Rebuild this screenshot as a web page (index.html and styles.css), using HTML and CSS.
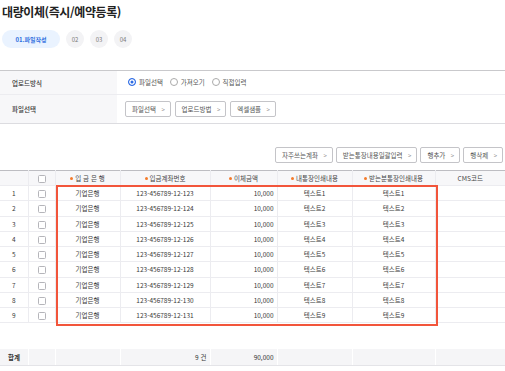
FILE: index.html
```html
<!DOCTYPE html>
<html lang="ko">
<head>
<meta charset="utf-8">
<link rel="stylesheet" href="styles.css">
</head>
<body>
<div class="page">
  <h1 class="title">대량이체(즉시/예약등록)</h1>
  <div class="steps">
    <span class="step active">01.파일작성</span>
    <span class="step">02</span>
    <span class="step">03</span>
    <span class="step">04</span>
  </div>

  <table class="form">
    <tr class="row-a">
      <th>업로드방식</th>
      <td>
        <label class="radio on"><span class="dot"></span>파일선택</label>
        <label class="radio"><span class="dot"></span>가져오기</label>
        <label class="radio"><span class="dot"></span>직접입력</label>
      </td>
    </tr>
    <tr class="row-b">
      <th>파일선택</th>
      <td>
        <span class="btn">파일선택<i class="chev">&gt;</i></span>
        <span class="btn">업로드방법<i class="chev">&gt;</i></span>
        <span class="btn">엑셀샘플<i class="chev">&gt;</i></span>
      </td>
    </tr>
  </table>

  <div class="actions">
    <span class="btn">자주쓰는계좌<i class="chev">&gt;</i></span>
    <span class="btn">받는통장내용일괄입력<i class="chev">&gt;</i></span>
    <span class="btn">행추가<i class="chev">&gt;</i></span>
    <span class="btn">행삭제<i class="chev">&gt;</i></span>
  </div>

  <div class="grid-wrap">
    <table class="grid">
      <colgroup>
        <col class="c-no"><col class="c-chk"><col class="c-bank"><col class="c-acc"><col class="c-amt"><col class="c-my"><col class="c-their"><col class="c-cms">
      </colgroup>
      <thead>
        <tr>
          <th></th>
          <th><span class="chk"></span></th>
          <th><span class="req">입 금 은 행</span></th>
          <th><span class="req">입금계좌번호</span></th>
          <th><span class="req">이체금액</span></th>
          <th><span class="req">내통장인쇄내용</span></th>
          <th><span class="req">받는분통장인쇄내용</span></th>
          <th>CMS코드</th>
        </tr>
      </thead>
      <tbody>
        <tr><td>1</td><td><span class="chk"></span></td><td>기업은행</td><td>123-456789-12-123</td><td class="num">10,000</td><td>텍스트1</td><td>텍스트1</td><td></td></tr>
        <tr><td>2</td><td><span class="chk"></span></td><td>기업은행</td><td>123-456789-12-124</td><td class="num">10,000</td><td>텍스트2</td><td>텍스트2</td><td></td></tr>
        <tr><td>3</td><td><span class="chk"></span></td><td>기업은행</td><td>123-456789-12-125</td><td class="num">10,000</td><td>텍스트3</td><td>텍스트3</td><td></td></tr>
        <tr><td>4</td><td><span class="chk"></span></td><td>기업은행</td><td>123-456789-12-126</td><td class="num">10,000</td><td>텍스트4</td><td>텍스트4</td><td></td></tr>
        <tr><td>5</td><td><span class="chk"></span></td><td>기업은행</td><td>123-456789-12-127</td><td class="num">10,000</td><td>텍스트5</td><td>텍스트5</td><td></td></tr>
        <tr><td>6</td><td><span class="chk"></span></td><td>기업은행</td><td>123-456789-12-128</td><td class="num">10,000</td><td>텍스트6</td><td>텍스트6</td><td></td></tr>
        <tr><td>7</td><td><span class="chk"></span></td><td>기업은행</td><td>123-456789-12-129</td><td class="num">10,000</td><td>텍스트7</td><td>텍스트7</td><td></td></tr>
        <tr><td>8</td><td><span class="chk"></span></td><td>기업은행</td><td>123-456789-12-130</td><td class="num">10,000</td><td>텍스트8</td><td>텍스트8</td><td></td></tr>
        <tr><td>9</td><td><span class="chk"></span></td><td>기업은행</td><td>123-456789-12-131</td><td class="num">10,000</td><td>텍스트9</td><td>텍스트9</td><td></td></tr>
        <tr class="spacer"><td colspan="8"></td></tr>
      </tbody>
      <tfoot>
        <tr>
          <td class="sum-label">합계</td><td></td><td></td><td class="num">9 건</td><td class="num">90,000</td><td></td><td></td><td></td>
        </tr>
      </tfoot>
    </table>
    <div class="highlight"></div>
  </div>
</div>
</body>
</html>
```

FILE: styles.css
```css
* { box-sizing: border-box; }
html, body { margin: 0; padding: 0; background: #fff; }
body {
  font-family: "Noto Sans CJK KR", "Noto Sans", sans-serif;
  color: #3a3a3a;
  font-size: 6.5px;
  -webkit-font-smoothing: antialiased;
}
.page { width: 505px; }

.title {
  margin: 0;
  padding: 4px 0 0 2px;
  font-size: 12px;
  line-height: 16px;
  font-weight: 700;
  color: #222;
  letter-spacing: -0.4px;
}

.steps {
  display: flex;
  gap: 6px;
  margin: 10px 0 0 2px;
  height: 18px;
}
.step {
  display: flex;
  align-items: center;
  justify-content: center;
  width: 18px;
  height: 18px;
  border-radius: 9px;
  background: #f3f3f5;
  color: #777;
  font-size: 6px;
}
.step.active {
  width: 58px;
  background: #eaf3ff;
  color: #2f6fe0;
  font-weight: 700;
}

.form {
  width: 100%;
  margin-top: 22px;
  border-collapse: collapse;
  border-top: 1px solid #c9c9cc;
  border-bottom: 1px solid #dcdce0;
}
.form th {
  width: 117px;
  background: #f7f7f9;
  text-align: left;
  font-weight: 500;
  color: #333;
  padding: 0 0 0 12px;
}
.form td { padding: 0 0 0 8px; }
.form .row-a th, .form .row-a td {
  height: 24px;
  border-bottom: 1px solid #ececf0;
}
.form .row-b th, .form .row-b td { height: 29px; }

.radio {
  display: inline-flex;
  align-items: center;
  gap: 3px;
  margin-right: 5px;
  color: #555;
}
.radio:first-child { margin-left: 3px; }
.radio .dot {
  width: 8px;
  height: 8px;
  border-radius: 50%;
  border: 1px solid #aaa;
  background: #fff;
}
.radio.on .dot {
  background: #2d6be4;
  border: 1.5px solid #2d6be4;
  box-shadow: inset 0 0 0 1.5px #fff;
}

.btn {
  display: inline-flex;
  align-items: center;
  height: 16px;
  padding: 0 5px 0 6px;
  border: 1px solid #c4c4c8;
  border-radius: 2px;
  background: #fff;
  color: #555;
  margin-right: 2px;
  white-space: nowrap;
}
.btn .chev {
  font-style: normal;
  margin-left: 5.5px;
  color: #888;
  font-size: 6px;
}

.actions {
  display: flex;
  justify-content: flex-end;
  gap: 3px;
  margin-top: 23px;
  padding-right: 2px;
}
.actions .btn { margin-right: 0; }

.grid-wrap {
  position: relative;
  margin-top: 7px;
}
.grid {
  width: 505px;
  table-layout: fixed;
  border-collapse: collapse;
  border-top: 1px solid #bdbdc2;
}
.c-no { width: 28px; }
.c-chk { width: 27px; }
.c-bank { width: 65px; }
.c-acc { width: 90px; }
.c-amt { width: 67px; }
.c-my { width: 75px; }
.c-their { width: 83px; }
.c-cms { width: 70px; }

.grid th, .grid td {
  padding: 0;
  text-align: center;
  white-space: nowrap;
  overflow: hidden;
  border-left: 1px solid #ececf0;
  border-bottom: 1px solid #ececf0;
}
.grid th:first-child, .grid td:first-child { border-left: none; }
.grid thead th {
  height: 15px;
  background: #f7f7f9;
  font-weight: 400;
  color: #444;
}
.grid tbody td { height: 15.25px; color: #3a3a3a; }
.grid td.num { text-align: right; padding-right: 3px; }
.req::before {
  content: "";
  display: inline-block;
  width: 3px;
  height: 3px;
  border-radius: 50%;
  background: #f47a2a;
  margin-right: 2px;
  vertical-align: middle;
  position: relative;
  top: -1px;
}
.chk {
  display: inline-block;
  width: 8px;
  height: 8px;
  border: 1px solid #b5b5ba;
  border-radius: 1.5px;
  background: #fff;
  vertical-align: middle;
}
.grid tr.spacer td {
  height: 26px;
  border-left: none;
  border-bottom: none;
}
.grid tfoot td {
  height: 17px;
  background: #f5f5f7;
  border-left: 1px solid #fff;
  border-bottom: 1px solid #e4e4e8;
  color: #333;
}
.grid tfoot td:first-child { border-left: none; }
.grid tfoot td.sum-label { font-weight: 700; text-align: left; padding-left: 8px; }

.highlight {
  position: absolute;
  left: 56px;
  top: 15px;
  width: 382px;
  height: 141px;
  border: 2px solid #f2553b;
  pointer-events: none;
}
```
